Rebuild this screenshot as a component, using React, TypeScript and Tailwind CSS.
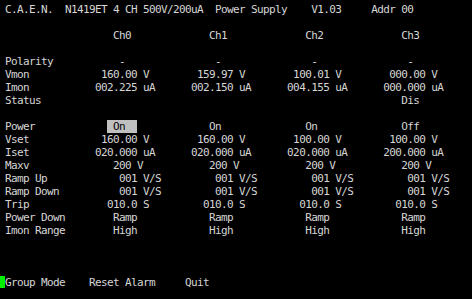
import React from 'react';

type Cell = [number, string];

const line = (cells: Cell[]) => {
  let s = '';
  for (const [col, text] of cells) {
    s = s.padEnd(col, ' ') + text;
  }
  return s;
};

const four = (cols: number[], vals: string[]): Cell[] => cols.map((c, i) => [c, vals[i]] as Cell);

const rows: string[] = [
  line([[0, 'C.A.E.N.  N1419ET 4 CH 500V/200uA  Power Supply    V1.03     Addr 00']]),
  '',
  line(four([18, 34, 50, 66], ['Ch0', 'Ch1', 'Ch2', 'Ch3'])),
  '',
  line([[0, 'Polarity'], ...four([19, 35, 51, 67], ['-', '-', '-', '-'])]),
  line([[0, 'Vmon'], ...four([16, 32, 48, 64], ['160.00 V', '159.97 V', '100.01 V', '000.00 V'])]),
  line([[0, 'Imon'], ...four([15, 31, 47, 63], ['002.225 uA', '002.150 uA', '004.155 uA', '000.000 uA'])]),
  line([[0, 'Status'], [66, 'Dis']]),
  '',
];

const settings: string[] = [
  line([[0, 'Vset'], ...four([16, 32, 48, 64], ['160.00 V', '160.00 V', '100.00 V', '100.00 V'])]),
  line([[0, 'Iset'], ...four([15, 31, 47, 63], ['020.000 uA', '020.000 uA', '020.000 uA', '200.000 uA'])]),
  line([[0, 'Maxv'], ...four([18, 34, 50, 66], ['200 V', '200 V', '200 V', '200 V'])]),
  line([[0, 'Ramp Up'], ...four([19, 35, 51, 67], ['001 V/S', '001 V/S', '001 V/S', '001 V/S'])]),
  line([[0, 'Ramp Down'], ...four([19, 35, 51, 67], ['001 V/S', '001 V/S', '001 V/S', '001 V/S'])]),
  line([[0, 'Trip'], ...four([17, 33, 49, 65], ['010.0 S', '010.0 S', '010.0 S', '010.0 S'])]),
  line([[0, 'Power Down'], ...four([18, 34, 50, 66], ['Ramp', 'Ramp', 'Ramp', 'Ramp'])]),
  line([[0, 'Imon Range'], ...four([18, 34, 50, 66], ['High', 'High', 'High', 'High'])]),
  '',
  '',
  '',
];

const Row: React.FC<{ children?: React.ReactNode }> = ({ children }) => (
  <div className="h-[13px] whitespace-pre">{children}</div>
);

const App: React.FC = () => {
  return (
    <div
      className="w-[472px] h-[299px] overflow-hidden bg-black text-[#d6d6d6] text-[11px] leading-[13px] tracking-[-0.62px] pt-[3px]"
      style={{ fontFamily: '"DejaVu Sans Mono", "Liberation Mono", monospace' }}
    >
      <div className="pl-[5px]">
        {rows.map((r, i) => (
          <Row key={i}>{r}</Row>
        ))}
        <Row>
          {'Power'.padEnd(17, ' ')}
          <span className="bg-[#c0c0c0] text-black">{' On  '}</span>
          {line([[12, 'On'], [28, 'On'], [44, 'Off']])}
        </Row>
        {settings.map((r, i) => (
          <Row key={i}>{r}</Row>
        ))}
      </div>
      <div className="flex items-start h-[13px] whitespace-pre">
        <span className="w-[5px] h-[12px] bg-[#00f000]" />
        <span>{line([[0, 'Group Mode'], [14, 'Reset Alarm'], [30, 'Quit']])}</span>
      </div>
    </div>
  );
};

export default App;
